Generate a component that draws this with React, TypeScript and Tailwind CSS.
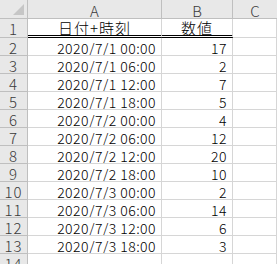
const rows: [string, number][] = [
  ['2020/7/1 00:00', 17],
  ['2020/7/1 06:00', 2],
  ['2020/7/1 12:00', 7],
  ['2020/7/1 18:00', 5],
  ['2020/7/2 00:00', 4],
  ['2020/7/2 06:00', 12],
  ['2020/7/2 12:00', 20],
  ['2020/7/2 18:00', 10],
  ['2020/7/3 00:00', 2],
  ['2020/7/3 06:00', 14],
  ['2020/7/3 12:00', 6],
  ['2020/7/3 18:00', 3],
];

const font = { fontFamily: '"Noto Sans CJK JP", "Liberation Sans", sans-serif' };

const RowHead = ({ n }: { n: number | string }) => (
  <div className="flex items-center justify-center border-r border-b border-[#bfbfbf] bg-[#e8e8e8] pt-[1px] text-[15px] tracking-[1px] text-[#3a3a3a]">
    {n}
  </div>
);

const Cell = ({ children, className = '' }: { children?: React.ReactNode; className?: string }) => (
  <div className={`flex items-center border-r border-b border-[#d6d6d6] pt-[2px] pr-[5px] text-[14px] tracking-[0.45px] text-black whitespace-nowrap overflow-hidden ${className}`}>
    {children}
  </div>
);

export default function App() {
  return (
    <div className="h-[264px] w-[277px] overflow-hidden bg-white leading-none font-light" style={font}>
      <div className="grid grid-cols-[28px_134px_71px_1fr] grid-rows-[19px_19px_repeat(13,18px)]">
        {/* column headers */}
        <div className="relative border-r border-b border-[#bfbfbf] bg-[#e8e8e8]">
          <div className="absolute right-[3px] bottom-[3px] h-0 w-0" style={{ borderBottom: '11px solid #c6c6c6', borderLeft: '11px solid transparent' }} />
        </div>
        <div className="flex items-center justify-center border-r border-b border-[#bfbfbf] bg-[#e8e8e8] pt-[2px] text-[15px] text-[#3a3a3a]">A</div>
        <div className="flex items-center justify-center border-r border-b border-[#bfbfbf] bg-[#e8e8e8] pt-[2px] text-[15px] text-[#3a3a3a]">B</div>
        <div className="flex items-center justify-center border-b border-[#bfbfbf] bg-[#e8e8e8] pt-[2px] text-[15px] text-[#3a3a3a]">C</div>

        {/* row 1 */}
        <RowHead n={1} />
        <div className="flex items-center justify-center border-r border-[#d6d6d6] border-b-[3px] border-b-black [border-bottom-style:double] pt-[1px] text-[15px] tracking-[1px] text-black">日付+時刻</div>
        <div className="flex items-center justify-center border-r border-[#d6d6d6] border-b-[3px] border-b-black [border-bottom-style:double] pt-[1px] text-[15px] tracking-[1px] text-black">数値</div>
        <Cell />

        {rows.map(([d, v], i) => (
          <div key={d} className="contents">
            <RowHead n={i + 2} />
            <Cell className="justify-end">{d}</Cell>
            <Cell className="justify-end">{v}</Cell>
            <Cell />
          </div>
        ))}

        <RowHead n={14} />
        <Cell />
        <Cell />
        <Cell />
      </div>
    </div>
  );
}
